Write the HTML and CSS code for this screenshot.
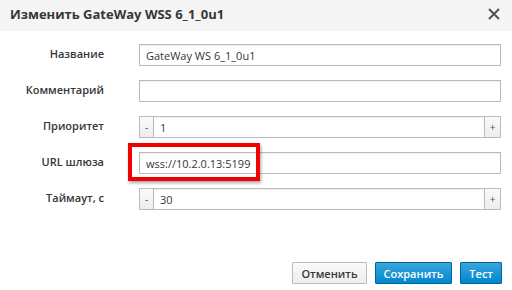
FILE: index.html
```html
<!DOCTYPE html>
<html lang="ru">
<head>
  <meta charset="UTF-8">
  <title>Изменить GateWay WSS 6_1_0u1</title>
  <link rel="stylesheet" href="styles.css">
</head>
<body>
  <div class="modal">
    <div class="modal-header">
      <h4>Изменить GateWay WSS 6_1_0u1</h4>
      <span class="close">
        <svg width="12" height="12" viewBox="0 0 12 12">
          <path d="M1 1 L11 11 M11 1 L1 11" stroke="#4d5258" stroke-width="2" fill="none"/>
        </svg>
      </span>
    </div>

    <div class="modal-body">
      <label>Название</label>
      <div class="field"><input type="text" value="GateWay WS 6_1_0u1"></div>

      <label>Комментарий</label>
      <div class="field"><input type="text" value=""></div>

      <label>Приоритет</label>
      <div class="field spin">
        <button class="spin-btn">-</button>
        <input type="text" value="1">
        <button class="spin-btn">+</button>
      </div>

      <label>URL шлюза</label>
      <div class="field marked">
        <input type="text" value="wss://10.2.0.13:5199">
        <!-- рамка-пометка поверх поля -->
        <span class="mark"></span>
      </div>

      <label>Таймаут, с</label>
      <div class="field spin">
        <button class="spin-btn">-</button>
        <input type="text" value="30">
        <button class="spin-btn">+</button>
      </div>
    </div>

    <div class="modal-footer">
      <button class="btn">Отменить</button>
      <button class="btn btn-primary">Сохранить</button>
      <button class="btn btn-primary">Тест</button>
    </div>
  </div>
</body>
</html>
```

FILE: styles.css
```css
body {
  margin: 0;
  padding: 0;
  background-color: #FFF;
  font-family: "Open Sans", "Liberation Sans", sans-serif;
  font-size: 11px;
  color: #363636;
}

.modal {
  height: 290px;
  display: flex;
  flex-direction: column;
}

.modal-header {
  height: 31px;
  padding: 0 12px 0 10px;
  box-sizing: border-box;
  background-color: #F5F5F5;
  display: flex;
  align-items: center;
  justify-content: space-between;
}

.modal-header h4 {
  margin: 0 0 3px;
  font-size: 13px;
  font-weight: 700;
  color: #363636;
}

.close {
  display: block;
  height: 12px;
  margin-bottom: 4px;
}

.close svg {
  display: block;
}

.modal-body {
  padding: 13px 11px 0 0;
  display: grid;
  grid-template-columns: 104px 1fr;
  column-gap: 35px;
  row-gap: 14px;
  align-items: center;
}

.modal-body label {
  text-align: right;
  font-weight: 600;
  line-height: 22px;
  margin-top: -2px;
}

.field {
  height: 22px;
  display: flex;
}

.field input {
  flex: 1;
  min-width: 0;
  height: 22px;
  margin: 0;
  padding: 0 6px;
  box-sizing: border-box;
  border: 1px solid #BBB;
  border-radius: 0;
  font-family: inherit;
  font-size: 11px;
  color: #363636;
  box-shadow: inset 0 1px 1px rgba(3, 3, 3, 0.06);
  outline: none;
}

.spin input {
  border-left: none;
  border-right: none;
}

.spin-btn {
  width: 15px;
  height: 22px;
  margin: 0;
  padding: 0;
  border: 1px solid #BBB;
  background: linear-gradient(#FAFAFA, #EDEDED);
  font-family: inherit;
  font-size: 10px;
  color: #4D5258;
}

.spin-btn:last-child {
  width: 17px;
}

.marked {
  position: relative;
}

.mark {
  position: absolute;
  left: -11px;
  top: -9px;
  width: 132px;
  height: 38px;
  box-sizing: border-box;
  border: 4px solid #F00000;
  box-shadow: 1px 2px 3px rgba(0, 0, 0, 0.35);
}

.modal-footer {
  margin-top: auto;
  padding: 0 10px 6px 0;
  display: flex;
  justify-content: flex-end;
  gap: 8px;
}

.btn {
  height: 22px;
  padding: 0 8px;
  border: 1px solid #BBB;
  border-radius: 1px;
  background: linear-gradient(#FAFAFA, #EDEDED);
  font-family: inherit;
  font-size: 11px;
  font-weight: 600;
  color: #363636;
}

.btn-primary {
  border-color: #00659C;
  background: linear-gradient(#39A5DC, #0088CE);
  color: #FFF;
}
```
